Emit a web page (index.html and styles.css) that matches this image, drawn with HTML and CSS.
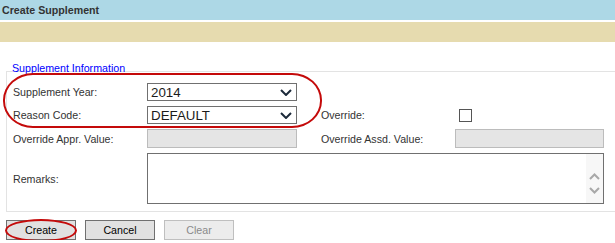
FILE: index.html
```html
<!DOCTYPE html>
<html lang="en">
<head>
    <meta charset="UTF-8">
    <title>Create Supplement</title>
    <link rel="stylesheet" href="styles.css">
</head>
<body>
<div class="page">
    <div class="titlebar">Create Supplement</div>
    <div class="toolbar"></div>

    <div class="content">
        <div class="legend">Supplement Information</div>
        <div class="panel">
            <div class="form-grid">
                <label class="lbl c1 r1">Supplement Year:</label>
                <div class="select c2 r1">
                    <span>2014</span>
                    <svg width="12" height="7" viewBox="0 0 12 7"><path d="M1 1 L6 6 L11 1" fill="none" stroke="#1c2a3a" stroke-width="2"/></svg>
                </div>

                <label class="lbl c1 r2">Reason Code:</label>
                <div class="select c2 r2">
                    <span>DEFAULT</span>
                    <svg width="12" height="7" viewBox="0 0 12 7"><path d="M1 1 L6 6 L11 1" fill="none" stroke="#1c2a3a" stroke-width="2"/></svg>
                </div>
                <label class="lbl c4 r2">Override:</label>
                <div class="c5 r2 check-cell"><input type="checkbox" class="check"></div>

                <label class="lbl c1 r3">Override Appr. Value:</label>
                <input type="text" class="field c2 r3" disabled>
                <label class="lbl c4 r3">Override Assd. Value:</label>
                <input type="text" class="field c5 r3" disabled>

                <label class="lbl c1 r4">Remarks:</label>
                <div class="remarks r4">
                    <textarea></textarea>
                    <div class="scroll">
                        <svg width="11" height="7" viewBox="0 0 11 7"><path d="M1 6 L5.5 1.5 L10 6" fill="none" stroke="#a8a8a8" stroke-width="2"/></svg>
                        <svg width="11" height="7" viewBox="0 0 11 7"><path d="M1 1 L5.5 5.5 L10 1" fill="none" stroke="#a8a8a8" stroke-width="2"/></svg>
                    </div>
                </div>
            </div>
        </div>

        <div class="actions">
            <button type="button" class="btn">Create</button>
            <button type="button" class="btn">Cancel</button>
            <button type="button" class="btn" disabled>Clear</button>
        </div>
    </div>

    <!-- review marks -->
    <div class="mark mark-fields"></div>
    <div class="mark mark-create"></div>
</div>
</body>
</html>
```

FILE: styles.css
```css
html, body {
    margin: 0;
    padding: 0;
    overflow: hidden;
    background-color: #fff;
}
body {
    font-family: "Liberation Sans", Arial, sans-serif;
    font-size: 10.67px;
    color: #333;
}
.page {
    position: relative;
}
.titlebar {
    height: 20px;
    line-height: 20px;
    padding-left: 2px;
    background-color: #add8e6;
    font-weight: bold;
    color: #333;
}
.toolbar {
    height: 20px;
    margin-top: 2px;
    background-color: #e6dbaf;
}
.content {
    padding-top: 20px;
}
.legend {
    margin-left: 12px;
    margin-bottom: -4px;
    line-height: 13px;
    color: #0000ff;
}
.panel {
    margin: 0 -10px 0 6px;
    padding: 11px 0 7px 6px;
    border: 1px solid #e3e3e3;
}
.form-grid {
    display: grid;
    grid-template-columns: 134px 150px 24px 134px 149px;
    grid-template-rows: 18px 18px 19px 51px;
    row-gap: 5px;
    align-items: center;
}
.c1 { grid-column: 1; }
.c2 { grid-column: 2; }
.c4 { grid-column: 4; }
.c5 { grid-column: 5; }
.r1 { grid-row: 1; }
.r2 { grid-row: 2; }
.r3 { grid-row: 3; }
.r4 { grid-row: 4; }
.lbl {
    color: #333;
}
.select {
    box-sizing: border-box;
    height: 18px;
    display: flex;
    align-items: center;
    justify-content: space-between;
    padding: 0 4px 0 3px;
    border: 1px solid #707070;
    background: #fff;
    font-size: 13.33px;
    color: #1b1b1b;
}
.check-cell {
    display: flex;
    align-items: center;
}
.check {
    appearance: none;
    -webkit-appearance: none;
    width: 13px;
    height: 13px;
    margin: 0 0 0 4px;
    border: 1px solid #555;
    background: #fff;
}
.field {
    box-sizing: border-box;
    height: 19px;
    width: 100%;
    margin: 0;
    border: 1px solid #bcbcbc;
    background: #e5e5e5;
}
.remarks {
    grid-column: 2 / 6;
    box-sizing: border-box;
    height: 51px;
    display: flex;
    border: 1px solid #707070;
    background: #fff;
}
.remarks textarea {
    flex: 1;
    border: 0;
    margin: 0;
    padding: 2px;
    resize: none;
    outline: none;
    font-family: inherit;
}
.scroll {
    width: 17px;
    display: flex;
    flex-direction: column;
    align-items: center;
    gap: 7px;
    padding-top: 19px;
    background: #f7f7f7;
}
.actions {
    display: flex;
    gap: 9px;
    margin: 8px 0 0 6px;
}
.btn {
    box-sizing: border-box;
    width: 70px;
    height: 20px;
    padding: 0;
    border: 1px solid #707070;
    background: #e1e1e1;
    font-family: inherit;
    font-size: 10.67px;
    color: #000;
}
.btn:disabled {
    border-color: #bfbfbf;
    background: #ececec;
    color: #8a8a8a;
}
.mark {
    position: absolute;
    box-sizing: border-box;
    border: 2px solid #c40a0a;
}
.mark-fields {
    left: 3px;
    top: 73px;
    width: 319px;
    height: 55px;
    border-radius: 30px / 27px;
}
.mark-create {
    left: 5px;
    top: 219px;
    width: 72px;
    height: 23px;
    border-radius: 50%;
}
```
